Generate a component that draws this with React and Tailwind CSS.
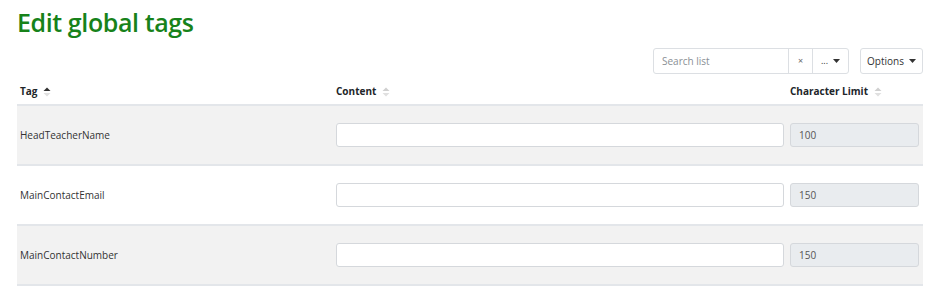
import React from 'react';

const rows = [
  { tag: 'HeadTeacherName', limit: '100' },
  { tag: 'MainContactEmail', limit: '150' },
  { tag: 'MainContactNumber', limit: '150' },
];

const SortIcon = ({ active }) => (
  <svg width="8" height="10" viewBox="0 0 8 10" className="ml-[6px] inline-block">
    <path d="M4 0.5 L7.5 4 L0.5 4 Z" fill={active ? '#333' : '#d0d0d0'} />
    <path d="M4 9.5 L7.5 6 L0.5 6 Z" fill="#e0e0e0" />
  </svg>
);

const Caret = () => (
  <svg width="7" height="4" viewBox="0 0 7 4" className="ml-[5px] inline-block">
    <path d="M0 0 L7 0 L3.5 4 Z" fill="#333" />
  </svg>
);

const App = () => {
  return (
    <div className="w-[940px] h-[300px] bg-white px-[17px] pt-[5px] text-[#212529]" style={{ fontFamily: '"Open Sans", sans-serif' }}>
      <h1 className="text-[25px] leading-[34px] font-semibold text-[#17821a] tracking-[-0.4px]">Edit global tags</h1>

      <div className="flex justify-end mt-[9px]">
        <div className="flex h-[26px] border border-[#dcdfe3] rounded-[3px]">
          <input
            className="w-[135px] px-[8px] text-[10px] outline-none placeholder:text-[#8a8f95] border-r border-[#dcdfe3]"
            placeholder="Search list"
          />
          <button className="w-[24px] text-[9px] text-[#666] border-r border-[#dcdfe3]">×</button>
          <button className="w-[35px] flex items-center justify-center text-[9px] text-[#333]">
            ...<Caret />
          </button>
        </div>
        <button className="ml-[11px] h-[26px] w-[63px] border border-[#dcdfe3] rounded-[3px] flex items-center justify-center text-[10px] text-[#333]">
          Options<Caret />
        </button>
      </div>

      <table className="w-[906px] mt-[5px] border-collapse text-[10px] table-fixed">
        <colgroup>
          <col className="w-[316px]" />
          <col className="w-[454px]" />
          <col className="w-[136px]" />
        </colgroup>
        <thead>
          <tr className="h-[26px] border-b-2 border-[#e3e6ea]">
            <th className="text-left font-bold px-[3px] align-middle">Tag<SortIcon active /></th>
            <th className="text-left font-bold px-[3px] align-middle">Content<SortIcon /></th>
            <th className="text-left font-bold px-[3px] align-middle">Character Limit<SortIcon /></th>
          </tr>
        </thead>
        <tbody>
          {rows.map((r, i) => (
            <tr key={r.tag} className={`h-[60px] border-b-2 border-[#e3e6ea] ${i % 2 === 0 ? 'bg-[#f2f2f2]' : 'bg-white'}`}>
              <td className="px-[3px] text-[#333]">{r.tag}</td>
              <td className="px-[3px]">
                <input className="w-[448px] h-[24px] bg-white border border-[#d5d8dc] rounded-[3px] outline-none" />
              </td>
              <td className="px-[3px]">
                <input
                  readOnly
                  value={r.limit}
                  className="w-[129px] h-[24px] bg-[#e9ecef] border border-[#d5d8dc] rounded-[3px] px-[8px] text-[10px] text-[#555] outline-none"
                />
              </td>
            </tr>
          ))}
        </tbody>
      </table>
    </div>
  );
};

export default App;
